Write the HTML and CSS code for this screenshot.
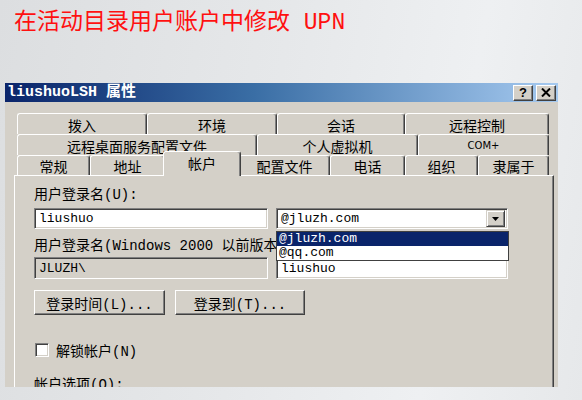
FILE: index.html
```html
<!DOCTYPE html>
<html lang="zh-CN">
<head>
    <meta charset="UTF-8">
    <title>在活动目录用户账户中修改 UPN</title>
    <link rel="stylesheet" href="styles.css">
</head>
<body>
    <h1 class="slide-title">在活动目录用户账户中修改 UPN</h1>

    <div class="dialog">
        <div class="titlebar">
            <span class="titlebar-text">liushuoLSH 属性</span>
            <div class="titlebar-btns">
                <span class="tb-btn">?</span>
                <span class="tb-btn">
                    <svg width="10" height="9" viewBox="0 0 10 9">
                        <path d="M1 0.5 L9 8.5 M9 0.5 L1 8.5" stroke="#000" stroke-width="2"/>
                    </svg>
                </span>
            </div>
        </div>

        <div class="dialog-body">
            <div class="tab-row">
                <div class="tab tab-dialin">拨入</div>
                <div class="tab tab-env">环境</div>
                <div class="tab tab-session">会话</div>
                <div class="tab tab-remote">远程控制</div>
            </div>
            <div class="tab-row">
                <div class="tab tab-rds">远程桌面服务配置文件</div>
                <div class="tab tab-vm">个人虚拟机</div>
                <div class="tab tab-com">COM+</div>
            </div>
            <div class="tab-row">
                <div class="tab tab-general">常规</div>
                <div class="tab tab-address">地址</div>
                <div class="tab tab-account active">帐户</div>
                <div class="tab tab-profile">配置文件</div>
                <div class="tab tab-phone">电话</div>
                <div class="tab tab-org">组织</div>
                <div class="tab tab-member">隶属于</div>
            </div>

            <div class="tab-panel">
                <div class="field-label">用户登录名(U):</div>
                <div class="field-row">
                    <div class="textbox">liushuo</div>
                    <div class="combo-wrap">
                        <div class="textbox combo">
                            <span>@jluzh.com</span>
                            <span class="combo-btn">
                                <svg width="7" height="4" viewBox="0 0 7 4"><path d="M0 0 H7 L3.5 4 Z" fill="#000"/></svg>
                            </span>
                        </div>
                        <div class="dropdown">
                            <div class="dropdown-item selected">@jluzh.com</div>
                            <div class="dropdown-item">@qq.com</div>
                        </div>
                    </div>
                </div>

                <div class="field-label label-2">用户登录名(Windows 2000 以前版本)(W):</div>
                <div class="field-row row-2">
                    <div class="textbox disabled">JLUZH\</div>
                    <div class="textbox wide">liushuo</div>
                </div>

                <div class="btn-row">
                    <span class="btn">登录时间(L)...</span>
                    <span class="btn">登录到(T)...</span>
                </div>

                <label class="check-row">
                    <span class="checkbox"></span>
                    <span>解锁帐户(N)</span>
                </label>

                <div class="field-label label-3">帐户选项(O):</div>
            </div>
        </div>
    </div>
</body>
</html>
```

FILE: styles.css
```css
body {
    margin: 0;
    height: 400px;
    overflow: hidden;
    background: linear-gradient(100deg, #dcdee0 0%, #e6e8ea 45%, #eef0f2 75%, #e6e8ea 100%);
    font-family: "Liberation Mono", "Noto Sans CJK SC", monospace;
    font-size: 14px;
    color: #000;
}
.slide-title {
    margin: 0;
    padding: 8px 0 0 14px;
    height: 30px;
    line-height: 30px;
    font-family: "Liberation Mono", "Noto Sans CJK SC", monospace;
    font-weight: normal;
    font-size: 23px;
    color: #ff1010;
}
.dialog {
    margin: 45px 0 0 5px;
    width: 553px;
    height: 304px;
    overflow: hidden;
    background: #d4d0c8;
}
.titlebar {
    height: 19px;
    display: flex;
    align-items: center;
    justify-content: space-between;
    padding: 0 2px;
    background: linear-gradient(90deg, #0a246a 0%, #3a6ea5 45%, #a6caf0 100%);
}
.titlebar-text {
    color: #fff;
    font-weight: bold;
    font-size: 15px;
    line-height: 19px;
}
.titlebar-btns {
    display: flex;
    gap: 3px;
}
.tb-btn {
    width: 18px;
    height: 14px;
    display: flex;
    align-items: center;
    justify-content: center;
    background: #d4d0c8;
    border: 1px solid;
    border-color: #fff #404040 #404040 #fff;
    box-shadow: inset -1px -1px #808080;
    font-family: "Liberation Sans", sans-serif;
    font-weight: bold;
    font-size: 13px;
    line-height: 14px;
}
.dialog-body {
    padding: 11px 0 0 9px;
}
.tab-row {
    display: flex;
    height: 21px;
    margin-left: 3px;
}
.tab-row:nth-child(3) {
    height: 20px;
}
.tab {
    box-sizing: border-box;
    height: 100%;
    display: flex;
    align-items: center;
    justify-content: center;
    border-top: 1px solid #fff;
    border-left: 1px solid #fff;
    border-right: 1px solid #404040;
    border-radius: 3px 3px 0 0;
    box-shadow: inset -1px 0 #808080;
    background: #d4d0c8;
    font-family: "Noto Sans CJK SC", sans-serif;
    line-height: 18px;
    padding-top: 1px;
}
.tab-dialin, .tab-env { width: 130px; }
.tab-session { width: 128px; }
.tab-remote { width: 144px; }
.tab-rds { width: 240px; }
.tab-vm { width: 161px; }
.tab-com {
    width: 131px;
    font-family: "DejaVu Sans", sans-serif;
    font-size: 10px;
}
.tab-general { width: 73px; }
.tab-address { width: 75px; }
.tab-profile { width: 91px; }
.tab-phone { width: 75px; }
.tab-org { width: 73px; }
.tab-member { width: 71px; }
.tab.active {
    width: 78px;
    margin: -4px -2px 0;
    height: 25px;
    align-items: flex-start;
    padding-top: 2px;
    position: relative;
    z-index: 1;
}
.tab-panel {
    box-sizing: border-box;
    width: 540px;
    height: 240px;
    border-top: 1px solid #fff;
    border-left: 1px solid #fff;
    border-right: 1px solid #404040;
    box-shadow: inset -1px 0 #808080;
    padding: 9px 0 0 19px;
}
.field-label {
    font-size: 14px;
    line-height: 20px;
    white-space: nowrap;
}
.field-row {
    display: flex;
    gap: 8px;
    margin-top: 3px;
}
.textbox {
    box-sizing: border-box;
    width: 234px;
    height: 21px;
    padding: 0 4px;
    display: flex;
    align-items: center;
    background: #fff;
    border: 1px solid;
    border-color: #808080 #fff #fff #808080;
    box-shadow: inset 1px 1px #404040, inset -1px -1px #d4d0c8;
    font-size: 13px;
}
.textbox.disabled {
    background: #d4d0c8;
    height: 22px;
}
.textbox.wide, .combo-wrap {
    width: 232px;
}
.textbox.wide {
    height: 22px;
}
.combo-wrap {
    position: relative;
}
.combo {
    width: 232px;
    justify-content: space-between;
    padding-right: 2px;
}
.combo-btn {
    box-sizing: border-box;
    width: 19px;
    height: 17px;
    display: flex;
    align-items: center;
    justify-content: center;
    background: #d4d0c8;
    border: 1px solid;
    border-color: #d4d0c8 #404040 #404040 #d4d0c8;
    box-shadow: inset 1px 1px #fff, inset -1px -1px #808080;
}
.dropdown {
    position: absolute;
    top: 23px;
    left: 0;
    width: 233px;
    box-sizing: border-box;
    background: #fff;
    border: 1px solid #404040;
    z-index: 2;
}
.dropdown-item {
    height: 14px;
    line-height: 14px;
    padding-left: 2px;
    font-size: 13px;
}
.dropdown-item.selected {
    background: #0a246a;
    color: #fff;
}
.label-2 {
    margin-top: 7px;
    width: 242px;
    overflow: hidden;
}
.row-2 {
    margin-top: 1px;
}
.btn-row {
    display: flex;
    gap: 10px;
    margin-top: 11px;
}
.btn {
    box-sizing: border-box;
    width: 131px;
    height: 25px;
    display: flex;
    align-items: center;
    justify-content: center;
    border: 1px solid;
    border-color: #fff #404040 #404040 #fff;
    box-shadow: inset -1px -1px #808080;
    font-size: 14px;
}
.btn + .btn {
    width: 130px;
}
.check-row {
    display: flex;
    align-items: center;
    gap: 7px;
    margin-top: 25px;
    margin-left: 1px;
    font-size: 14px;
}
.checkbox {
    box-sizing: border-box;
    width: 14px;
    height: 14px;
    background: #fff;
    border: 1px solid;
    border-color: #808080 #fff #fff #808080;
    box-shadow: inset 1px 1px #404040, inset -1px -1px #d4d0c8;
}
.label-3 {
    margin-top: 15px;
}
```
